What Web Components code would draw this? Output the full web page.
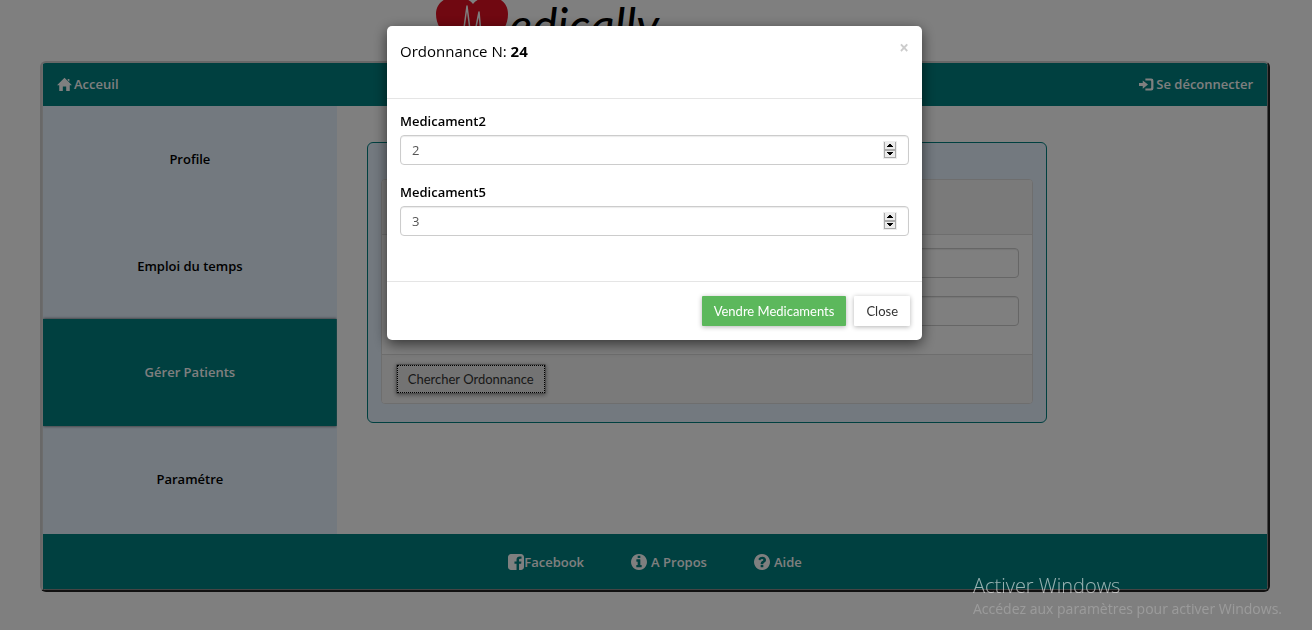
<!DOCTYPE html>
<html lang="fr">
<head>
<meta charset="utf-8">
<title>Medically</title>
<style>
  body { margin: 0; background: #fff; color: #000; font: 13px/20px "Open Sans", "Noto Sans", sans-serif; overflow: hidden; }
</style>
</head>
<body>
<medi-app></medi-app>
<script>
const define = (name, html, setup) => {
  const template = document.createElement('template');
  template.innerHTML = html;
  customElements.define(name, class extends HTMLElement {
    connectedCallback() {
      if (this.shadowRoot) return;
      this.attachShadow({ mode: 'open' }).append(template.content.cloneNode(true));
      if (setup) setup(this, this.shadowRoot);
    }
  });
};

const circle = 'M1536 896q0 209-103 385.5t-279.5 279.5-385.5 103-385.5-103-279.5-279.5-103-385.5 103-385.5 279.5-279.5 385.5-103 385.5 103 279.5 279.5 103 385.5z';
const icons = {
  home: ['0 0 16 16', 'M8 .8 16 8.800H13.600V15H9.800V10.200H6.200V15H2.400V8.800H0L8 .8ZM11.400 2H13.200V5L11.400 3.400Z'],
  login: ['0 0 16 16', 'M0 6.4H4V3.6L9.6 8 4 12.400V9.600H0ZM6.8 1.600H13Q15.400 1.600 15.400 4V12Q15.400 14.400 13 14.400H6.800V12.200H12Q13 12.200 13 11.200V4.800Q13 3.800 12 3.800H6.800Z'],
  facebook: ['0 128 1536 1536', 'M1248 128q119 0 203.5 84.5t84.5 203.5v960q0 119-84.5 203.5t-203.5 84.5h-188v-595h199l30-232h-229v-148q0-56 23.5-84t91.5-28l122-1v-207q-63-9-178-9-136 0-217.5 80t-81.5 226v171h-200v232h200v595h-532q-119 0-203.5-84.5t-84.5-203.5v-960q0-119 84.5-203.5t203.5-84.5h960z'],
  info: ['0 128 1536 1536', 'M1024 1376v-160q0-14-9-23t-23-9h-96v-512q0-14-9-23t-23-9h-320q-14 0-23 9t-9 23v160q0 14 9 23t23 9h96v320h-96q-14 0-23 9t-9 23v160q0 14 9 23t23 9h448q14 0 23-9t9-23zm-128-896v-160q0-14-9-23t-23-9h-192q-14 0-23 9t-9 23v160q0 14 9 23t23 9h192q14 0 23-9t9-23z' + circle],
  help: ['0 128 1536 1536', 'M896 1376v-192q0-14-9-23t-23-9h-192q-14 0-23 9t-9 23v192q0 14 9 23t23 9h192q14 0 23-9t9-23zm256-672q0-88-55.5-163t-138.5-116-170-41q-243 0-371 213-15 24 8 42l132 100q7 6 19 6 16 0 25-12 53-68 86-92 34-24 86-24 48 0 85.5 26t37.5 59q0 38-20 61t-68 45q-63 28-115.5 86.5t-52.5 125.5v36q0 14 9 23t23 9h192q14 0 23-9t9-23q0-19 21.5-49.5t54.5-49.5q32-18 49-28.5t46-35 44.5-48 28-60.5 12.5-81z' + circle]
};

define('medi-icon', `
<style>
  :host { display: block; width: var(--icon, 16px); height: var(--icon, 16px); }
  svg { display: block; width: 100%; height: 100%; fill: currentColor; fill-rule: evenodd; }
</style>
<svg aria-hidden="true"><path/></svg>`, (host, root) => {
  const [box, d] = icons[host.getAttribute('name')];
  root.querySelector('svg').setAttribute('viewBox', box);
  root.querySelector('path').setAttribute('d', d);
});

define('medi-link', `
<style>
  :host { display: block; }
  a { display: flex; align-items: center; gap: var(--gap, 2px); color: #fff; font-weight: 600; text-decoration: none; white-space: nowrap; }
</style>
<a href="#"><slot name="icon"></slot><slot></slot></a>`);

define('medi-logo', `
<style>
  :host { display: block; height: 61px; overflow: hidden; padding-right: 2px; }
  svg { display: block; width: 440px; height: 61px; margin: 0 auto; }
  text { font: italic 48px "Lato", "Open Sans", sans-serif; }
</style>
<svg viewBox="0 0 440 61" role="img" aria-label="Medically">
  <path fill="#e01022" d="M38 58C23 46 1 34 1 14C1 3 10-3 20-3C29-3 35 0 38 4C41 0 47-3 55-3C65-3 73 3 73 14C73 34 53 46 38 58Z"/>
  <path fill="none" stroke="#fff" stroke-width="1.500" stroke-linejoin="round" d="M22 40 29 28 32 6 35 30 39 36 41 27 44 12 46 34"/>
  <text x="74" y="43">edically</text>
</svg>`);

define('medi-side-item', `
<style>
  :host { display: grid; flex: 1; }
  a { display: grid; place-items: center; color: #000; font-weight: 600; text-decoration: none; }
  :host([active]) { z-index: 1; }
  :host([active]) a { background: #008080; color: #fff; box-shadow: 0 0 3px rgba(0,0,0,.7); clip-path: inset(-4px 0); }
</style>
<a href="#"><slot></slot></a>`);

define('medi-button', `
<style>
  :host { display: block; }
  button { display: block; box-sizing: border-box; height: 30px; padding: 0 12px; border: 0; border-radius: 1px; background: #fff; color: #333; font: 13px/20px "Lato", "Open Sans", sans-serif; white-space: nowrap; box-shadow: 0 1px 5px rgba(0,0,0,.3); }
  :host([kind=success]) button { background: #5cb85c; color: #fff; }
  :host([kind=focused]) button { background: #e6e6e6; border: 1px solid #999; outline: 1px dotted #000; outline-offset: -2px; padding: 0 11px; box-shadow: 0 1px 4px rgba(0,0,0,.4); }
</style>
<button type="button"><slot></slot></button>`);

define('medi-field', `
<style>
  :host { display: block; }
  label { display: block; font-weight: 600; margin-bottom: 4px; }
  .box { display: flex; align-items: center; box-sizing: border-box; height: 30px; padding: 0 11px; border: 1px solid #ccc; border-radius: 4px; background: #fff; box-shadow: inset 0 1px 1px rgba(0,0,0,.08); }
  input { flex: 1; min-width: 0; border: 0; padding: 0; outline: 0; background: none; color: #555; font: inherit; appearance: textfield; }
  input::-webkit-inner-spin-button { appearance: none; margin: 0; }
  svg { width: 14px; height: 18px; }
</style>
<label for="f"></label>
<div class="box"><input id="f" type="number">
<svg viewBox="0 0 14 18" aria-hidden="true" shape-rendering="crispEdges">
  <path fill="#ececec" d="M0 0H14V18H0Z"/>
  <path fill="#aaa" d="M1 1H2V17H1ZM12 1H13V17H12ZM1 8H13V10H1ZM1 16H13V17H1Z"/>
  <path d="M6 3H8V4H9V5H10V6H4V5H5V4H6ZM4 11H10V12H9V13H8V14H6V13H5V12H4Z"/>
</svg></div>`, (host, root) => {
  root.querySelector('label').textContent = host.getAttribute('label');
  root.querySelector('input').value = host.getAttribute('value');
});

define('medi-search', `
<style>
  :host { display: block; box-sizing: border-box; border: 1px solid #008080; border-radius: 6px; background: #e6f2ff; padding: 36px 13px 18px; }
  form { display: block; border: 1px solid #ddd; border-radius: 4px; background: #fff; overflow: hidden; }
  header { height: 54px; background: #f5f5f5; border-bottom: 1px solid #ddd; }
  .fields { display: grid; gap: 18px; padding: 13px 13px 28px; }
  input { display: block; box-sizing: border-box; width: 100%; height: 30px; border: 1px solid #ccc; border-radius: 4px; background: #fff; box-shadow: inset 0 1px 1px rgba(0,0,0,.08); }
  footer { display: flex; padding: 9px 14px; background: #f5f5f5; border-top: 1px solid #ddd; }
</style>
<form>
  <header></header>
  <div class="fields"><input type="text" aria-label="Patient"><input type="text" aria-label="Ordonnance"></div>
  <footer><medi-button kind="focused">Chercher Ordonnance</medi-button></footer>
</form>`);

define('medi-modal', `
<style>
  :host { position: fixed; inset: 0; display: flex; justify-content: center; align-items: flex-start; padding: 26px 3px 0 0; background: rgba(0,0,0,.5); z-index: 5; }
  section { width: 535px; max-width: 100%; background: #fff; border-radius: 5px; box-shadow: 0 4px 14px rgba(0,0,0,.6); }
  header { display: flex; justify-content: space-between; align-items: flex-start; padding: 15px 13px 36px; border-bottom: 1px solid #e5e5e5; }
  h4 { margin: 0; font-size: 15px; line-height: 21px; font-weight: 400; }
  header button { border: 0; padding: 0; background: none; color: #ccc; font: 700 17px/14px "Open Sans", sans-serif; }
  .body { display: grid; gap: 17px; padding: 12px 13px 45px; }
  footer { display: flex; justify-content: flex-end; gap: 8px; padding: 14px 12px; border-top: 1px solid #e5e5e5; }
</style>
<section role="dialog" aria-modal="true" aria-labelledby="t">
  <header><h4 id="t"><slot name="title"></slot></h4><button type="button" aria-label="Fermer">×</button></header>
  <div class="body"><slot></slot></div>
  <footer><slot name="actions"></slot></footer>
</section>`);

define('medi-watermark', `
<style>
  :host { position: fixed; right: 30px; bottom: 11px; z-index: 9; white-space: nowrap; pointer-events: none; }
  p { margin: 0; }
  .big { font-size: 20px; line-height: 26px; font-weight: 300; color: rgba(255,255,255,.6); }
  .small { font-size: 14px; line-height: 20px; color: rgba(255,255,255,.22); }
</style>
<p class="big">Activer Windows</p>
<p class="small">Accédez aux paramètres pour activer Windows.</p>`);

define('medi-app', `
<style>
  :host { display: block; }
  .frame { margin: 0 42px 0 40px; border: 2px solid; border-color: #d0d0d0 #222 #222 #d0d0d0; border-radius: 6px; overflow: hidden; }
  .inner { border: solid #888; border-width: 0 1px 1px; border-left-color: #d8d8d8; }
  nav, .foot { display: flex; background: #008080; }
  nav { justify-content: space-between; padding: 11px 14px 12px; --icon: 15px; }
  .main { display: flex; height: 428px; }
  aside { display: flex; flex-direction: column; box-sizing: border-box; width: 24%; background: #e6f2ff; padding-bottom: 2px; }
  main { flex: 1; padding: 36px 220px 0 30px; }
  .foot { justify-content: center; gap: 47px; padding: 18px 0 17px; }
  .wide { --gap: 4px; }
  .tight { --gap: 0px; }
</style>
<medi-logo></medi-logo>
<div class="frame"><div class="inner">
  <nav>
    <medi-link><medi-icon slot="icon" name="home"></medi-icon>Acceuil</medi-link>
    <medi-link><medi-icon slot="icon" name="login"></medi-icon>Se déconnecter</medi-link>
  </nav>
  <div class="main">
    <aside>
      <medi-side-item>Profile</medi-side-item>
      <medi-side-item>Emploi du temps</medi-side-item>
      <medi-side-item active>Gérer Patients</medi-side-item>
      <medi-side-item>Paramétre</medi-side-item>
    </aside>
    <main><medi-search></medi-search></main>
  </div>
  <div class="foot">
    <medi-link class="tight"><medi-icon slot="icon" name="facebook"></medi-icon>Facebook</medi-link>
    <medi-link class="wide"><medi-icon slot="icon" name="info"></medi-icon>A Propos</medi-link>
    <medi-link class="wide"><medi-icon slot="icon" name="help"></medi-icon>Aide</medi-link>
  </div>
</div></div>
<medi-modal>
  <span slot="title">Ordonnance N: <b>24</b></span>
  <medi-field label="Medicament2" value="2"></medi-field>
  <medi-field label="Medicament5" value="3"></medi-field>
  <medi-button slot="actions" kind="success">Vendre Medicaments</medi-button>
  <medi-button slot="actions">Close</medi-button>
</medi-modal>
<medi-watermark></medi-watermark>`);
</script>
</body>
</html>
